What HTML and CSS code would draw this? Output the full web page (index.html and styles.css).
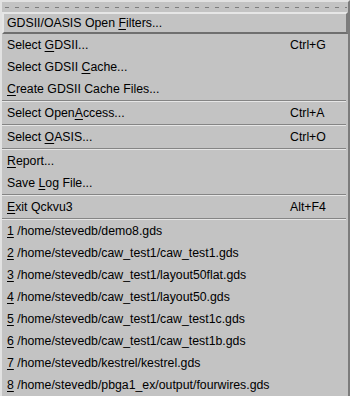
FILE: index.html
```html
<!DOCTYPE html>
<html>
  <head>
    <meta charset="UTF-8">
    <title>Qckvu3 File Menu</title>
    <link rel="stylesheet" href="styles.css">
  </head>
  <body>
    <div class="menu">
      <div class="tearoff"></div>

      <div class="item active"><span class="label">GDSII/OASIS Open <u>F</u>ilters...</span></div>
      <div class="item"><span class="label">Select <u>G</u>DSII...</span><span class="accel">Ctrl+G</span></div>
      <div class="item"><span class="label">Select GDSII <u>C</u>ache...</span></div>
      <div class="item"><span class="label"><u>C</u>reate GDSII Cache Files...</span></div>
      <div class="sep"></div>
      <div class="item"><span class="label">Select Open<u>A</u>ccess...</span><span class="accel">Ctrl+A</span></div>
      <div class="sep"></div>
      <div class="item"><span class="label">Select <u>O</u>ASIS...</span><span class="accel">Ctrl+O</span></div>
      <div class="sep"></div>
      <div class="item"><span class="label"><u>R</u>eport...</span></div>
      <div class="item"><span class="label">Save <u>L</u>og File...</span></div>
      <div class="sep"></div>
      <div class="item"><span class="label"><u>E</u>xit Qckvu3</span><span class="accel">Alt+F4</span></div>
      <div class="sep"></div>

      <!-- recent files -->
      <div class="item"><span class="label"><u>1</u> /home/stevedb/demo8.gds</span></div>
      <div class="item"><span class="label"><u>2</u> /home/stevedb/caw_test1/caw_test1.gds</span></div>
      <div class="item"><span class="label"><u>3</u> /home/stevedb/caw_test1/layout50flat.gds</span></div>
      <div class="item"><span class="label"><u>4</u> /home/stevedb/caw_test1/layout50.gds</span></div>
      <div class="item"><span class="label"><u>5</u> /home/stevedb/caw_test1/caw_test1c.gds</span></div>
      <div class="item"><span class="label"><u>6</u> /home/stevedb/caw_test1/caw_test1b.gds</span></div>
      <div class="item"><span class="label"><u>7</u> /home/stevedb/kestrel/kestrel.gds</span></div>
      <div class="item"><span class="label"><u>8</u> /home/stevedb/pbga1_ex/output/fourwires.gds</span></div>
    </div>
  </body>
</html>
```

FILE: styles.css
```css
body {
  margin: 0;
  background-color: #c3c3c3;
  font-family: "Liberation Sans", Arial, sans-serif;
  font-size: 12.3px;
  color: #000;
  overflow: hidden;
}

/* The menu (raised frame) */
.menu {
  width: 350px;
  height: 396px;
  box-sizing: border-box;
  border: 2px solid;
  border-color: #e2e2e2 #7c7c7c #7c7c7c #e2e2e2;
  border-bottom: none;
  display: flex;
  flex-direction: column;
}

/* Dashed tear-off line */
.tearoff {
  height: 10px;
  flex: none;
  display: flex;
  align-items: center;
  padding: 0 1px;
}

.tearoff::before {
  content: "";
  display: block;
  width: 100%;
  height: 1px;
  background-image: linear-gradient(to right, #7c7c7c 4px, transparent 4px);
  background-size: 10px 1px;
  background-position: 2px 0;
}

.item {
  height: 22px;
  flex: none;
  box-sizing: border-box;
  border: 2px solid transparent;
  padding-left: 3px;
  display: flex;
  align-items: center;
  white-space: nowrap;
}

/* Highlighted entry */
.item.active {
  border-color: #e6e6e6 #7c7c7c #6f6f6f #e6e6e6;
}

.label {
  flex: 1;
}

.accel {
  width: 56px;
}

u {
  text-decoration: underline;
  text-underline-offset: 2px;
}

/* Separator: dark line above a light one */
.sep {
  height: 1px;
  flex: none;
  margin: 0 2px 0 0;
  background-color: #858585;
  border-bottom: 1px solid #e6e6e6;
}
```
